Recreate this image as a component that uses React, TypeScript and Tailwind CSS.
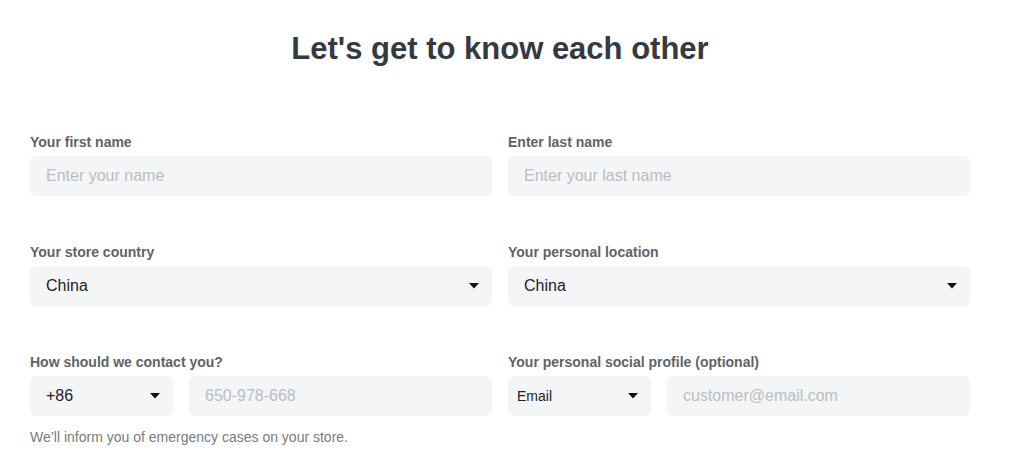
const font = { fontFamily: '"Liberation Sans", Arial, sans-serif' }

function Caret() {
  return (
    <svg width="10" height="6" viewBox="0 0 10 6" className="shrink-0">
      <path d="M0 0h10L5 5.5z" fill="#111" />
    </svg>
  )
}

function Label({ children }: { children: React.ReactNode }) {
  return <label className="mb-[6px] block text-sm leading-[16px] font-bold text-[#5f6368]">{children}</label>
}

function TextInput({ placeholder, className = '' }: { placeholder: string; className?: string }) {
  return (
    <input
      placeholder={placeholder}
      className={`h-10 rounded-md bg-[#f4f5f7] px-4 text-base text-[#333] outline-none placeholder:text-[#babdc1] ${className}`}
      style={font}
    />
  )
}

function Select({ value, className = '', small = false }: { value: string; className?: string; small?: boolean }) {
  return (
    <div
      className={`flex h-10 items-center justify-between rounded-md bg-[#f4f5f7] pr-[13px] text-[#222] ${
        small ? 'pl-[9px] text-sm' : 'pl-4 text-base'
      } ${className}`}
    >
      <span>{value}</span>
      <Caret />
    </div>
  )
}

export default function App() {
  return (
    <div className="min-h-screen bg-white" style={font}>
      <div className="w-[970px] pl-[30px] pt-[30px]">
        <h1 className="text-center text-[31px] leading-[37px] font-bold text-[#343a3f]">Let's get to know each other</h1>
        <div className="mt-[67px] grid grid-cols-2 gap-x-4 gap-y-12">
          <div>
            <Label>Your first name</Label>
            <TextInput placeholder="Enter your name" className="w-full" />
          </div>
          <div>
            <Label>Enter last name</Label>
            <TextInput placeholder="Enter your last name" className="w-full" />
          </div>
          <div>
            <Label>Your store country</Label>
            <Select value="China" />
          </div>
          <div>
            <Label>Your personal location</Label>
            <Select value="China" />
          </div>
          <div>
            <Label>How should we contact you?</Label>
            <div className="flex gap-4">
              <Select value="+86" className="w-[143px]" />
              <TextInput placeholder="650-978-668" className="min-w-0 flex-1" />
            </div>
            <p className="mt-[13px] text-sm leading-4 text-[#777b80]">We’ll inform you of emergency cases on your store.</p>
          </div>
          <div>
            <Label>Your personal social profile (optional)</Label>
            <div className="flex gap-4">
              <Select value="Email" small className="w-[143px]" />
              <TextInput placeholder="customer@email.com" className="min-w-0 flex-1" />
            </div>
          </div>
        </div>
      </div>
    </div>
  )
}
